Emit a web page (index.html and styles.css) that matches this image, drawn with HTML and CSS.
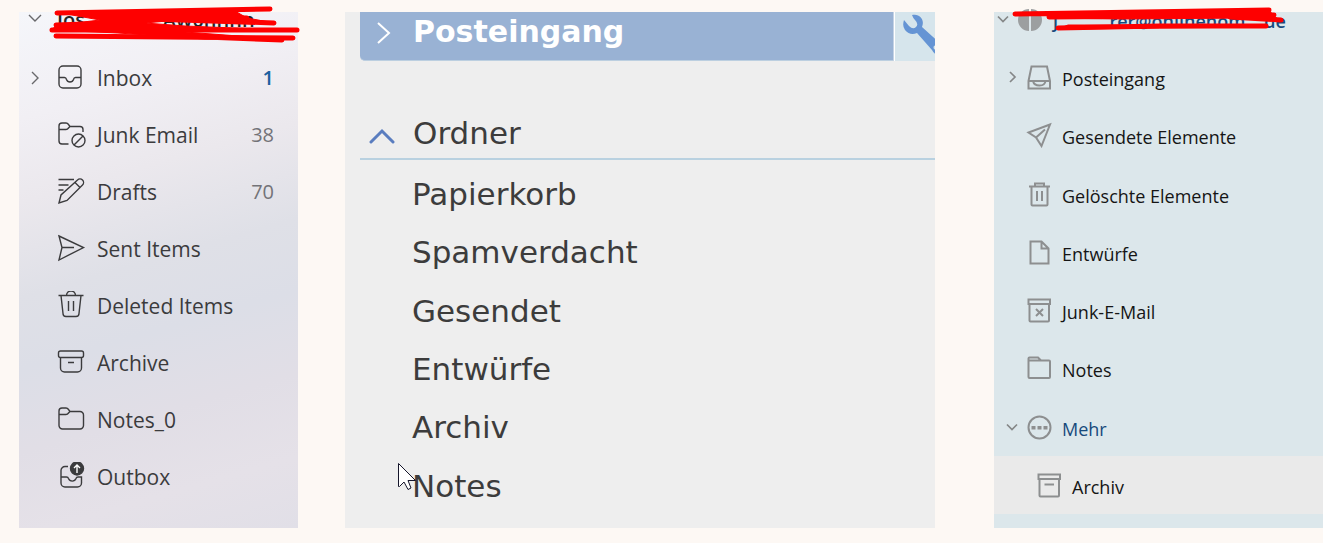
FILE: index.html
```
<!DOCTYPE html>
<html lang="de">
<head>
<meta charset="utf-8">
<title>Mail folders</title>
<link rel="stylesheet" href="styles.css">
</head>
<body>
<main class="board">
  <nav class="panel outlook" aria-label="Outlook folders">
    <header class="account">
      <svg class="chevron" viewBox="0 0 16 16"><path d="M2 3l6 6 6-6"/></svg>
      <span class="account-name">Jos&nbsp;&nbsp;&nbsp;&nbsp;&nbsp;&nbsp;&nbsp;&nbsp;&nbsp;&nbsp;&nbsp;&nbsp;&nbsp;&nbsp;&nbsp;Aw0nnnn</span>
      <svg class="marker" viewBox="0 0 260 40"><path class="blot" d="M17 5L195 3 207 10 234 15 165 13 127 13 105 15 145 18 218 21 145 21 132 23 238 31 165 31 78 25 12 22 16 17 35 15 60 12 32 7z"/><path d="M17 5L230 1M100 8L207 10M110 11L234 15M16 17L105 14M12 22L257 22M16 28L253 30M165 29L242 32M60 8L105 18"/></svg>
    </header>
    <ul class="folders">
      <li><a class="folder" href="#inbox"><svg class="chevron" viewBox="0 0 16 16"><path d="M5 2l6 6-6 6"/></svg><svg class="icon" viewBox="0 0 30 30"><rect x="3" y="3" width="22" height="22" rx="4"/><path d="M3 14.500h5.500q1.500 0 2 2a3.700 3.700 0 0 0 7 0q.500-2 2-2H25"/></svg><span class="label">Inbox</span><span class="count unread">1</span></a></li>
      <li><a class="folder" href="#junk"><svg class="icon" viewBox="0 0 30 30"><path d="M12.500 24H6a3 3 0 0 1-3-3V6a3 3 0 0 1 3-3h4q1.500 0 2.500 1.500L14 6.500h10a3 3 0 0 1 3 3V12M3 9.500h7q1.500 0 2.500-1.500L14 6.500"/><circle cx="22.500" cy="20.500" r="6.500"/><path d="M18 25l9-9"/></svg><span class="label">Junk Email</span><span class="count">38</span></a></li>
      <li><a class="folder" href="#drafts"><svg class="icon" viewBox="0 0 30 30"><path d="M2.500 2.500H18M2.500 8h10M2.500 13h5M3 26l2-8L21.500 3a3.300 3.300 0 0 1 5 5L11 23.500zM19 5.500l5 5"/></svg><span class="label">Drafts</span><span class="count">70</span></a></li>
      <li><a class="folder" href="#sent"><svg class="icon" viewBox="0 0 30 30"><path d="M3 2l24.500 11.500L3 26l3-12.500zM6 13.500h12"/></svg><span class="label">Sent Items</span></a></li>
      <li><a class="folder" href="#deleted"><svg class="icon" viewBox="0 0 30 30"><path d="M2.500 4.500h25M10.500 4.500a4.500 4.500 0 0 1 9 0M5 4.500l2 18a3 3 0 0 0 3 3h10a3 3 0 0 0 3-3l2-18M12.500 10v10M17.500 10v10"/></svg><span class="label">Deleted Items</span></a></li>
      <li><a class="folder" href="#archive"><svg class="icon" viewBox="0 0 30 30"><rect x="2.500" y="3" width="25" height="6.500" rx="2"/><path d="M4.500 9.500V20a4 4 0 0 0 4 4h13a4 4 0 0 0 4-4V9.500M12 14.500h6"/></svg><span class="label">Archive</span></a></li>
      <li><a class="folder" href="#notes0"><svg class="icon" viewBox="0 0 30 30"><path d="M3 6a3 3 0 0 1 3-3h4q1.500 0 2.500 1.500L14 6.500h10a3.500 3.500 0 0 1 3.500 3.500v10.500A3.500 3.500 0 0 1 24 24H6.500A3.500 3.500 0 0 1 3 20.500zM3 9.500h7q1.500 0 2.500-1.500L14 6.500"/></svg><span class="label">Notes_0</span></a></li>
      <li><a class="folder" href="#outbox"><svg class="icon" viewBox="0 0 30 30"><path d="M12 4.500H9a4 4 0 0 0-4 4V21a4 4 0 0 0 4 4h12.500a4 4 0 0 0 4-4v-6H22q-1.500 0-2 1.500a4 4 0 0 1-7.500 0Q12 15 10.500 15H5"/><circle class="solid" cx="21" cy="6.500" r="6.500"/><path class="light" d="M21 11V3M18 6l3-3 3 3"/></svg><span class="label">Outbox</span></a></li>
    </ul>
  </nav>

  <nav class="panel webmail" aria-label="Webmail Ordner">
    <header class="toolbar">
      <a class="inbox-bar" href="#posteingang"><svg class="bar-chevron" viewBox="0 0 16 24"><path d="M2 2l11 10L2 22"/></svg>Posteingang</a>
      <button class="tools" type="button" aria-label="Einstellungen"><svg class="wrench" viewBox="0 0 41 48"><path fill-rule="evenodd" d="M17 2C25 0 30 7 27 14L48 33Q50 38 45 41Q40 43 37 37L22 20Q15 23 10 17Q7 13 9 7L14 13Q18 17 21 14Q24 11 20 7Q18 5 17 2zM41 32a2.500 2.500 0 1 0 .1 0z"/></svg></button>
    </header>
    <button class="group" type="button"><svg class="group-chevron" viewBox="0 0 26 18"><path d="M2 16L13 5l11 11"/></svg>Ordner</button>
    <ul class="folders">
      <li><a class="folder" href="#papierkorb">Papierkorb</a></li>
      <li><a class="folder" href="#spam">Spamverdacht</a></li>
      <li><a class="folder" href="#gesendet">Gesendet</a></li>
      <li><a class="folder" href="#entwuerfe">Entwürfe</a></li>
      <li><a class="folder" href="#archiv">Archiv</a></li>
      <li><a class="folder" href="#notes">Notes<svg class="pointer" viewBox="0 0 18 28"><path d="M.500 .500V23.500h1L6 19l4 7.500 3-1.500-3-7.500h7.500z"/></svg></a></li>
    </ul>
  </nav>

  <nav class="panel mailapp" aria-label="Mail Ordner">
    <header class="account">
      <svg class="chevron" viewBox="0 0 12 12"><path d="M1 3.500l5 5 5-5"/></svg>
      <svg class="avatar" viewBox="0 0 24 24"><path d="M11 1v22a11 11 0 0 1 0-22zM13 1v22a11 11 0 0 0 0-22z"/></svg>
      <span class="account-name">j&nbsp;&nbsp;&nbsp;&nbsp;&nbsp;&nbsp;&nbsp;&nbsp;&nbsp;&nbsp;&nbsp;rer@onlinehom&nbsp;&nbsp;&nbsp;.de</span>
      <svg class="marker" viewBox="0 0 280 30"><path class="blot" d="M15 8L269 4 274 10 281 15 251 12 120 13 49 12 48 8z"/><path class="blot" d="M58 23L68 19 160 19 266 19 266 21 160 22z"/><path d="M15 8L269 4M49 11L274 9M230 11L281 14M58 22L160 20 266 20"/></svg>
    </header>
    <ul class="folders">
      <li><a class="folder" href="#m-posteingang"><svg class="chevron" viewBox="0 0 12 12"><path d="M4 1l5 5-5 5"/></svg><svg class="icon" viewBox="0 0 26 26"><path d="M2.500 17L5.500 2.500h15.500L24 17v7.500H2.500zM2.500 17H24M7 17q1 4.500 6.500 4.500T19.500 17"/></svg><span class="label">Posteingang</span></a></li>
      <li><a class="folder" href="#m-gesendet"><svg class="icon" viewBox="0 0 26 26"><path d="M24 2.500L2.500 10.500l7.500 5L15.500 24zM10 15.500L19 7.500"/></svg><span class="label">Gesendete Elemente</span></a></li>
      <li><a class="folder" href="#m-geloescht"><svg class="icon" viewBox="0 0 26 26"><path d="M3 5.500h21M9 5.500V2.500h9v3M5.500 5.500v18q0 1 1 1h14q1 0 1-1v-18M11 10v10M16 10v10"/></svg><span class="label">Gelöschte Elemente</span></a></li>
      <li><a class="folder" href="#m-entwuerfe"><svg class="icon" viewBox="0 0 26 26"><path d="M4.500 2.500h11l7 7v15h-18zM15.500 2.500v7h7"/></svg><span class="label">Entwürfe</span></a></li>
      <li><a class="folder" href="#m-junk"><svg class="icon" viewBox="0 0 26 26"><path d="M2.500 2.500H24v4.500H2.500zM3.500 7v16.500q0 1 1 1H22q1 0 1-1V7M10 12l7 7M17 12l-7 7"/></svg><span class="label">Junk-E-Mail</span></a></li>
      <li><a class="folder" href="#m-notes"><svg class="icon" viewBox="0 0 26 26"><path d="M2.500 3.500q0-1 1-1H12l3 3h8q1 0 1 1V22q0 1-1 1H3.500q-1 0-1-1zM2.500 5.500H15"/></svg><span class="label">Notes</span></a></li>
      <li><a class="folder more" href="#m-mehr"><svg class="chevron" viewBox="0 0 12 12"><path d="M1 3.500l5 5 5-5"/></svg><svg class="icon" viewBox="0 0 26 26"><circle cx="13.500" cy="13.500" r="11"/><path class="solid" d="M5.500 12h4v3.500h-4zM11.500 12h4v3.500h-4zM17.500 12h4v3.500h-4z"/></svg><span class="label">Mehr</span></a></li>
      <li><a class="folder nested" href="#m-archiv" aria-current="page"><svg class="icon" viewBox="0 0 26 26"><path d="M2.500 2.500H24v4.500H2.500zM3.500 7v16.500q0 1 1 1H22q1 0 1-1V7M8.500 12.500H18"/></svg><span class="label">Archiv</span></a></li>
    </ul>
  </nav>
</main>
</body>
</html>
```
FILE: styles.css
```
* { box-sizing: border-box; }

body {
  margin: 0;
  background: #fdf8f4;
  font-family: "Open Sans", sans-serif;
}

.board {
  display: grid;
  grid-template-columns: 279fr 637fr 388fr;
  min-height: 100vh;
  padding: 12px 0 15px 19px;
}

.panel {
  display: flex;
  flex-direction: column;
  min-width: 0;
}

svg {
  display: block;
  flex: none;
  fill: none;
  stroke: currentColor;
}

.folders {
  display: grid;
  flex: 1;
  grid-auto-rows: 1fr;
  margin: 0;
  padding: 0;
  list-style: none;
}

.folder {
  display: flex;
  align-items: center;
  position: relative;
  height: 100%;
  color: inherit;
  text-decoration: none;
  white-space: nowrap;
}

.account {
  display: flex;
  position: relative;
  white-space: nowrap;
}

.marker {
  position: absolute;
  stroke: #fe0000;
  stroke-width: 5;
  stroke-linecap: round;
  stroke-linejoin: round;
  overflow: visible;
}

.marker .blot { fill: #fe0000; stroke-width: 1; }

/* Outlook */
.outlook {
  padding-bottom: 23px;
  background: linear-gradient(164deg, #f5f6fa 0%, #f1eff4 18%, #ebe8ed 32%, #dfe0e7 48%, #dcdee7 60%, #e1dee6 74%, #e5e1e8 88%, #e1dfe7 100%);
  color: #3b3b3d;
}

.outlook .account {
  height: 37px;
  padding-left: 8px;
  gap: 14px;
}

.outlook .account-name {
  color: #252527;
  font-size: 20px;
  font-weight: 600;
  line-height: 16px;
}

.outlook .chevron { width: 16px; height: 16px; color: #68686b; stroke-width: 1.4; }
.outlook .marker { left: 21px; top: -4px; width: 260px; height: 40px; }

.outlook .folder {
  padding: 0 24px 0 37px;
  font-size: 21px;
}

.outlook .folder .chevron { position: absolute; left: 8px; }
.outlook .icon { width: 30px; height: 30px; margin-right: 11px; stroke-width: 1.4; }
.outlook .solid { fill: #3b3b3d; }
.outlook .light { stroke: #ffffff; }

.count {
  margin-left: auto;
  color: #737378;
  font-size: 20px;
}

.unread { color: #1d61a0; font-weight: 600; }

/* Webmail */
.webmail {
  margin-left: 47px;
  padding: 0 0 13px 15px;
  background: #eeeeee;
  color: #3c3c3c;
  font-family: "DejaVu Sans", sans-serif;
  font-size: 31px;
}

.toolbar { display: flex; height: 49px; }

.inbox-bar {
  display: flex;
  flex: 1;
  align-items: center;
  gap: 21px;
  padding: 0 0 10px 16px;
  border-right: 1px solid #c5d3e5;
  border-bottom: 1px solid #bccfe0;
  border-radius: 0 0 0 5px;
  background: #99b2d4;
  color: #ffffff;
  font-size: 30px;
  font-weight: 700;
  text-decoration: none;
}

.bar-chevron { width: 16px; height: 24px; margin-top: 4px; stroke-width: 2; }

.tools {
  width: 41px;
  margin: 0;
  padding: 0;
  overflow: hidden;
  border: 0;
  border-left: 1px solid #ffffff;
  background: #d6e5ec;
  color: #6594d4;
}

.wrench { width: 41px; height: 48px; fill: currentColor; stroke: none; }

.group {
  display: flex;
  align-items: center;
  height: 52px;
  margin: 47px 0 5px;
  padding: 0 0 0 9px;
  gap: 18px;
  border: 0;
  border-bottom: 2px solid #b9d1e0;
  background: none;
  color: inherit;
  font: inherit;
}

.group-chevron { width: 26px; height: 18px; margin-top: 4px; color: #5a7dbf; stroke-width: 3; stroke-linecap: round; }
.webmail .folder { padding-left: 52px; }

.pointer {
  position: absolute;
  left: 38px;
  top: 6px;
  width: 18px;
  height: 28px;
  fill: #ffffff;
  stroke: #15152a;
}

/* Mail app */
.mailapp {
  margin-left: 59px;
  padding-bottom: 14px;
  background: #dce7eb;
  color: #151515;
}

.mailapp .account {
  height: 36px;
  padding-left: 3px;
}

.mailapp .account .chevron { margin-top: 1px; }
.mailapp .chevron { width: 12px; height: 12px; color: #858788; stroke-width: 1.7; }

.avatar {
  width: 24px;
  height: 24px;
  margin: -4px 11px 0 9px;
  fill: #9c9fa0;
  stroke: none;
}

.mailapp .account-name {
  color: #174a7c;
  font-size: 18px;
  font-weight: 600;
  line-height: 18px;
}

.mailapp .marker { left: 6px; top: -6px; width: 280px; height: 30px; }

.mailapp .folder {
  padding-left: 32px;
  font-size: 18px;
}

.mailapp .folder .chevron { position: absolute; left: 12px; }
.mailapp .icon { width: 26px; height: 26px; margin-right: 10px; color: #8d8f90; stroke-width: 2; }
.mailapp .solid { fill: #8d8f90; stroke: none; }
.mailapp .label { padding-top: 4px; }
.mailapp .more { color: #174a7c; }
.mailapp .nested { padding-left: 42px; background: #eaeaea; }
```
